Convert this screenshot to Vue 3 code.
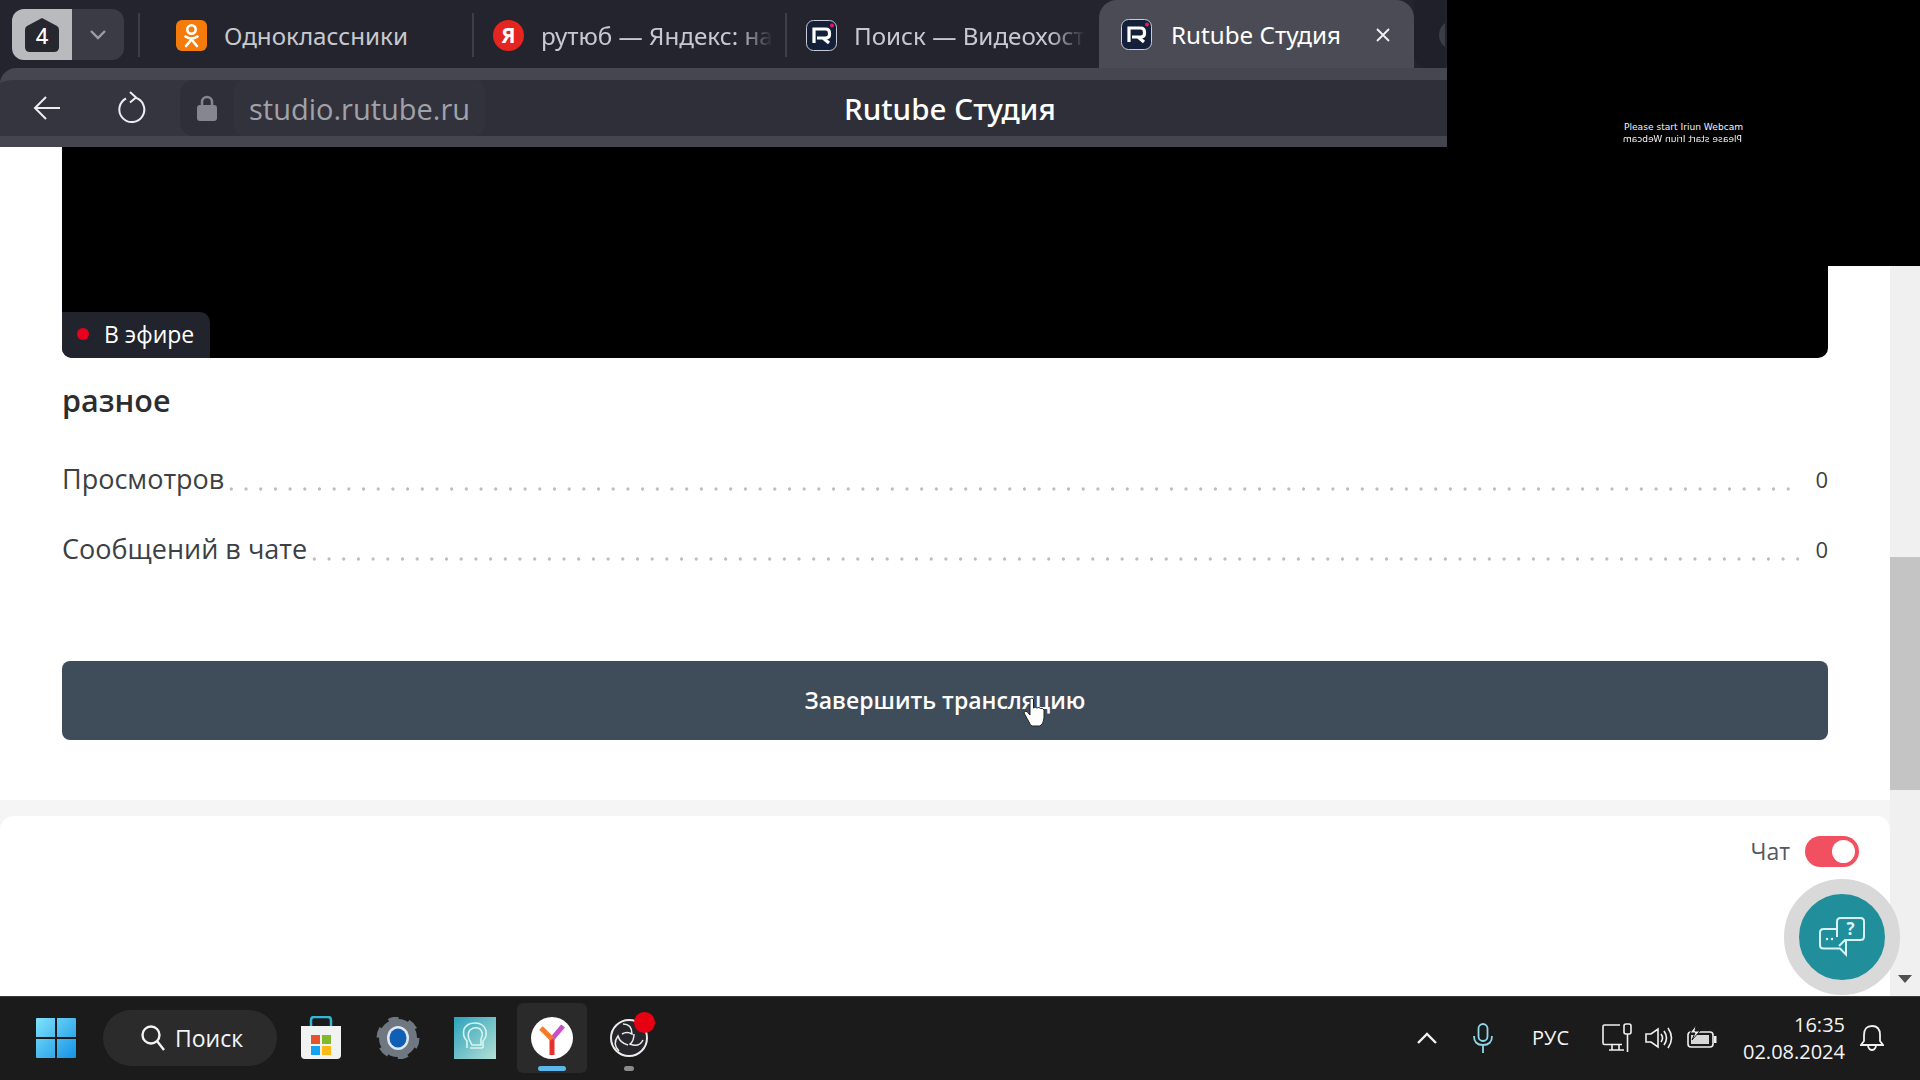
<template>
  <div class="screen">
    <header class="browser">
      <div class="tabstrip">
        <div class="counter">
          <div class="counter-main">
            <svg class="counter-shape" width="36" height="36" viewBox="0 0 36 36">
              <path d="M18 1 L33 9 Q35 10 35 13 V30 Q35 35 30 35 H6 Q1 35 1 30 V13 Q1 10 3 9 Z" fill="#26272f" />
            </svg>
            <span>4</span>
          </div>
          <div class="counter-more">
            <svg width="18" height="12" viewBox="0 0 18 12"><path d="M2 2l7 7 7-7" fill="none" stroke="#9c9da5" stroke-width="2.4" /></svg>
          </div>
        </div>
        <div class="tab" v-for="tab in tabs" :key="tab.title" :class="tab.cls">
          <svg v-if="tab.icon === 'ok'" class="fav" width="31" height="31" viewBox="0 0 31 31">
            <rect width="31" height="31" rx="6" fill="#f57c0a" />
            <circle cx="15.5" cy="9.5" r="4.2" fill="none" stroke="#fff" stroke-width="2.6" />
            <path d="M9.5 16.5q6 4 12 0M15.5 19v1M15.5 19.5l-5.5 6.5M15.5 19.5l5.500 6.500" fill="none" stroke="#fff" stroke-width="2.6" stroke-linecap="round" />
          </svg>
          <svg v-else-if="tab.icon === 'ya'" class="fav" width="31" height="31" viewBox="0 0 31 31">
            <circle cx="15.500" cy="15.500" r="15.500" fill="#e5251f" />
            <text x="15.500" y="23" text-anchor="middle" class="ya-letter">Я</text>
          </svg>
          <svg v-else class="fav" width="31" height="31" viewBox="0 0 31 31">
            <rect x=".5" y=".5" width="30" height="30" rx="7" fill="#14203a" stroke="#c9ccd6" />
            <path d="M8 23V9h11.500q4 0 4 4v1.500q0 3.500-4 3.500H11M17 18l6 5" fill="none" stroke="#fff" stroke-width="3.200" />
            <circle cx="26" cy="5.500" r="2" fill="#e6195a" />
          </svg>
          <span class="tab-title">{{ tab.title }}</span>
          <svg v-if="tab.cls === 'active'" class="tab-close" width="14" height="14" viewBox="0 0 14 14"><path d="M1 1l12 12M13 1L1 13" stroke="#f2f2f4" stroke-width="1.800" /></svg>
        </div>
        <div class="next-tab"></div>
      </div>
      <div class="toolbar">
        <svg class="tool" width="30" height="26" viewBox="0 0 30 26"><path d="M28 13H3M14 2L3 13l11 11" fill="none" stroke="#eeeef0" stroke-width="2" /></svg>
        <svg class="tool reload" width="30" height="34" viewBox="0 0 30 34"><path d="M18 6.500A12.500 12.500 0 1 1 9 7.500M13 1l6 5.500-6 5" fill="none" stroke="#eeeef0" stroke-width="2" /></svg>
        <div class="omnibox">
          <svg class="lock" width="20" height="27" viewBox="0 0 20 27"><path d="M5 12V7a5 5 0 0 1 10 0v5" fill="none" stroke="#85868e" stroke-width="2.500" /><rect y="10" width="20" height="16" rx="3" fill="#85868e" /></svg>
          <div class="host">studio.rutube.ru</div>
          <div class="page-title">Rutube Студия</div>
        </div>
      </div>
    </header>

    <div class="webcam">
      <p>Please start Iriun Webcam</p>
      <p class="mirrored">Please start Iriun Webcam</p>
    </div>

    <div class="workspace">
      <main class="page">
        <section class="stream">
          <div class="video">
            <div class="live"><i></i>В эфире</div>
          </div>
          <h2>разное</h2>
          <div class="stat" v-for="row in stats" :key="row.label">
            <span class="stat-label">{{ row.label }}</span>
            <span class="leader"></span>
            <span class="stat-value">{{ row.value }}</span>
          </div>
          <button class="finish" type="button">Завершить трансляцию</button>
        </section>
        <section class="chat">
          <span>Чат</span>
          <div class="toggle"><i></i></div>
        </section>
      </main>
      <aside class="scrollbar">
        <div class="thumb"></div>
        <svg class="scroll-down" width="14" height="8" viewBox="0 0 14 8"><path d="M0 0h14L7 8z" fill="#505050" /></svg>
      </aside>

      <div class="help">
        <svg width="46" height="40" viewBox="0 0 46 40">
          <path d="M18 12H4.500Q1 12 1 15.500V28q0 3.500 3.500 3.500H21l6 6V22" fill="none" stroke="#d8f3f4" stroke-width="2" />
          <path d="M18 20V4.500Q18 1 21.500 1h20Q45 1 45 4.500v15q0 3.500-3.500 3.500H26l-6 6" fill="none" stroke="#d8f3f4" stroke-width="2" />
          <text x="31.500" y="18" text-anchor="middle" class="help-q">?</text>
          <circle cx="8" cy="22" r="1.200" fill="#d8f3f4" /><circle cx="13" cy="22" r="1.200" fill="#d8f3f4" />
        </svg>
      </div>

      <svg class="pointer" width="24" height="30" viewBox="0 0 24 30">
        <path d="M7 2q2-2 3.500 0v9q2-1.500 3.500 0 2-1.500 3.500.5 2.500-1 3.500 1.500V21q-.5 6-4 8H9q-2-1-3-4L1 16q0-2.500 3-1.500L7 18z" fill="#fff" stroke="#222" stroke-width="1" />
      </svg>
    </div>

    <footer class="taskbar">
      <div class="task-left">
        <svg class="start" width="40" height="40" viewBox="0 0 40 40">
          <defs><linearGradient id="win" x1="0" y1="0" x2="1" y2="1"><stop offset="0" stop-color="#7fe3fa" /><stop offset="1" stop-color="#1492e6" /></linearGradient></defs>
          <path d="M0 1q0-1 1-1h18v19H0zM21 0h18q1 0 1 1v18H21zM0 21h19v19H1q-1 0-1-1zM21 21h19v18q0 1-1 1H21z" fill="url(#win)" />
        </svg>
        <div class="search">
          <svg width="26" height="28" viewBox="0 0 26 28"><circle cx="11" cy="11" r="8.500" fill="none" stroke="#f4f4f4" stroke-width="2.400" /><path d="M17 17l7 9" stroke="#f4f4f4" stroke-width="2.400" /></svg>
          <span>Поиск</span>
        </div>
        <svg class="app store" width="42" height="44" viewBox="0 0 42 44">
          <path d="M11 12V4q0-3 3-3h14q3 0 3 3v8" fill="none" stroke="#35b7d4" stroke-width="2.500" />
          <path d="M1 10h40v29q0 4-4 4H5q-4 0-4-4z" fill="#f1f3f3" />
          <rect x="11" y="19" width="9" height="9" fill="#e8532b" /><rect x="22" y="19" width="9" height="9" fill="#7fba2c" />
          <rect x="11" y="30" width="9" height="9" fill="#14a4ef" /><rect x="22" y="30" width="9" height="9" fill="#fab914" />
        </svg>
        <svg class="app gear" width="44" height="42" viewBox="0 0 44 42">
          <circle cx="22" cy="21" r="14" fill="none" stroke="#6f7880" stroke-width="10" />
          <circle cx="22" cy="21" r="18" fill="none" stroke="#6f7880" stroke-width="7" stroke-dasharray="9.400 9.450" />
          <ellipse cx="22" cy="21" rx="11" ry="12" fill="#dfe8f2" />
          <ellipse cx="22" cy="21" rx="8.500" ry="9.500" fill="#0f5fb5" />
        </svg>
        <svg class="app tile" width="42" height="42" viewBox="0 0 42 42">
          <defs><linearGradient id="tile" x1="0" y1="0" x2="1" y2="1"><stop offset="0" stop-color="#2aa2bb" /><stop offset="1" stop-color="#b5e0d6" /></linearGradient></defs>
          <rect width="42" height="42" fill="url(#tile)" />
          <path d="M13 31V24q-5-5-3-12 3-6 11-6 9 0 11 8 1 6-3 10v7M16 31h13M15 22q-2-5 1-9 5-4 10-1 4 4 1 10v6h-9z" fill="none" stroke="#d7f4f2" stroke-width="1.600" />
        </svg>
        <div class="active-app">
          <svg width="42" height="42" viewBox="0 0 42 42">
            <ellipse cx="21" cy="21" rx="21" ry="21" fill="#fff" />
            <path d="M21 38V22" fill="none" stroke="#e8312c" stroke-width="5" />
            <path d="M21 22L32 9" fill="none" stroke="#c84fc4" stroke-width="5" />
            <path d="M21 22L10 11" fill="none" stroke="#f4792b" stroke-width="5" />
          </svg>
          <i></i>
        </div>
        <div class="obs">
          <svg width="38" height="40" viewBox="0 0 38 40">
            <circle cx="19" cy="20" r="18" fill="#26262c" stroke="#ececec" stroke-width="2" />
            <path d="M13 6q9 0 9 10-5-3-10 0M33 22q-4 8-13 4 4-3 4-10M9 33q-7-7-1-15 2 7 10 9" fill="none" stroke="#ececec" stroke-width="1.500" />
          </svg>
          <b></b>
          <i></i>
        </div>
      </div>
      <div class="tray">
        <svg class="chev" width="20" height="12" viewBox="0 0 20 12"><path d="M1 11l9-9 9 9" fill="none" stroke="#f2f2f2" stroke-width="2.400" /></svg>
        <svg class="mic" width="20" height="30" viewBox="0 0 20 30"><rect x="5.500" y="1" width="9" height="17" rx="4.500" fill="none" stroke="#8fd6e8" stroke-width="1.800" /><path d="M1 13q0 9 9 9t9-9M10 22v8" fill="none" stroke="#8fd6e8" stroke-width="1.800" /></svg>
        <span class="lang">РУС</span>
        <svg class="net" width="30" height="29" viewBox="0 0 30 29"><path d="M18 2H2.500Q1 2 1 3.500V20q0 1.500 1.500 1.500H20M7 27h15M10 22v5M17 22v5" fill="none" stroke="#f0f0f0" stroke-width="1.600" /><rect x="22" y="1" width="7" height="10" rx="2" fill="none" stroke="#f0f0f0" stroke-width="1.600" /><path d="M25.500 11v18" stroke="#f0f0f0" stroke-width="1.600" /></svg>
        <svg class="sound" width="28" height="24" viewBox="0 0 28 24"><path d="M1 8h5l7-5v18l-7-5H1zM16 8q3 4 0 8M19 5q5 7 0 14M23 2q7 10 0 20" fill="none" stroke="#f0f0f0" stroke-width="1.600" /></svg>
        <svg class="batt" width="30" height="26" viewBox="0 0 30 26"><rect x="1" y="7" width="25" height="15" rx="3" fill="none" stroke="#f0f0f0" stroke-width="1.600" /><rect x="4" y="10" width="18" height="9" fill="#d8d8d8" /><rect x="27" y="11" width="2.500" height="7" fill="#f0f0f0" /><path d="M9 0L3 8h5l-3 7 8-9H8z" fill="#f0f0f0" stroke="#1b1b1b" /></svg>
        <div class="clock"><div>16:35</div><div>02.08.2024</div></div>
        <svg class="bell" width="24" height="28" viewBox="0 0 24 28"><path d="M12 2q8 0 8 9v6l3 4H1l3-4v-6q0-9 8-9zM8 22q1 4 4 4t4-4" fill="none" stroke="#f0f0f0" stroke-width="1.800" /></svg>
      </div>
    </footer>
  </div>
</template>

<script setup>
const tabs = [
  { title: 'Одноклассники', icon: 'ok', cls: 'ok-tab' },
  { title: 'рутюб — Яндекс: на', icon: 'ya', cls: 'faded' },
  { title: 'Поиск — Видеохост', icon: 'r', cls: 'faded' },
  { title: 'Rutube Студия', icon: 'r', cls: 'active' },
]

const stats = [
  { label: 'Просмотров', value: 0 },
  { label: 'Сообщений в чате', value: 0 },
]
</script>

<style>
html, body { margin: 0; overflow: hidden; background: #fff; }
</style>

<style scoped>
.screen {
  width: 1920px;
  height: 1080px;
  display: flex;
  flex-direction: column;
  position: relative;
  overflow: hidden;
  font-family: "Open Sans", "Noto Sans", sans-serif;
}

/* browser */
.browser { width: 1447px; height: 147px; flex: none; background: #23242e; color: #fff; display: flex; flex-direction: column; }
.tabstrip { height: 68px; display: flex; align-items: stretch; padding-left: 12px; flex: none; font-family: "Noto Sans", sans-serif; }
.counter { display: flex; height: 51px; margin-top: 9px; margin-right: 14px; }
.counter-main {
  width: 60px; background: #b9babe; border-radius: 12px 0 0 12px; position: relative;
  display: flex; align-items: center; justify-content: center; font-size: 22px; font-weight: 500; color: #fff;
}
.counter-main span { position: relative; }
.counter-shape { position: absolute; left: 12px; top: 8px; }
.counter-more { width: 52px; background: #3a3b45; border-radius: 0 12px 12px 0; display: flex; align-items: center; justify-content: center; }
.tab { display: flex; align-items: center; border-left: 2px solid #3d3e48; height: 44px; margin-top: 13px; padding-left: 19px; width: 313px; box-sizing: border-box; font-size: 24.2px; color: #c8c9ce; white-space: nowrap; }
.tab.ok-tab { width: 334px; padding-left: 36px; margin-left: 0; }
.tab.active {
  width: 315px; height: 68px; margin-top: 0; border: none; padding-left: 22px; background: #4a4b54; color: #fff;
  border-radius: 18px 18px 0 0; position: relative; margin-left: 1px;
}
.tab.active .fav { margin-right: 19px; }
.tab.faded .tab-title { -webkit-mask-image: linear-gradient(90deg, #000 85%, transparent); mask-image: linear-gradient(90deg, #000 85%, transparent); }
.tab.faded { width: 313px; }
.fav { flex: none; margin-right: 17px; }
.ya-letter { font: 700 21px "Noto Sans", sans-serif; fill: #fff; }
.tab-close { position: absolute; right: 24px; top: 28px; }
.next-tab { width: 31px; margin-left: 0; background: #1f2029; border-radius: 0 0 0 14px; height: 68px; position: relative; overflow: hidden; }
.next-tab::after { content: ""; position: absolute; left: 25px; top: 20px; width: 30px; height: 30px; border-radius: 50%; background: #3b3c46; }

.toolbar { flex: 1; background: #34353f; border-top: 12px solid #45464f; border-bottom: 11px solid #44454e; border-radius: 16px 0 0 0; display: flex; align-items: center; padding-left: 32px; }
.reload { margin-left: 55px; }
.omnibox { margin-left: 33px; flex: 1; align-self: stretch; background: #2e2f39; border-radius: 14px 0 0 14px; display: flex; align-items: center; padding-left: 17px; position: relative; }
.host { margin-left: 17px; padding: 0 15px; height: 100%; display: flex; align-items: center; background: #31323c; border-radius: 10px; font-size: 29px; color: #a1a2a9; }
.page-title { position: absolute; left: 664px; top: 50%; transform: translateY(-50%); font-size: 29.6px; font-weight: 500; color: #fff; white-space: nowrap; font-family: "Noto Sans", sans-serif; }

/* webcam preview */
.webcam { position: absolute; left: 1447px; top: 0; width: 473px; height: 266px; background: #000; z-index: 3; color: #f2f2f2; font: 9.1px/12px "DejaVu Sans", sans-serif; padding: 121px 0 0 177px; box-sizing: border-box; }
.webcam p { margin: 0; width: 118px; white-space: nowrap; }
.webcam .mirrored { transform: scaleX(-1); }

/* page */
.workspace { flex: 1; display: flex; min-height: 0; position: relative; }
.page { flex: 1; display: flex; flex-direction: column; background: #f5f5f5; }
.stream { background: #fff; padding: 0 62px 61px; height: 653px; box-sizing: border-box; flex: none; margin-bottom: 16px; display: flex; flex-direction: column; }
.video { height: 211px; background: #000; border-radius: 0 0 10px 10px; position: relative; flex: none; }
.live {
  position: absolute; left: 0; bottom: 0; width: 148px; height: 46px; background: #21242c; border-radius: 0 10px 0 10px;
  display: flex; align-items: center; color: #fff; font-size: 23px; line-height: 44px; box-sizing: border-box; padding: 0 0 2px 15px;
}
.live i { width: 12px; height: 12px; border-radius: 50%; background: #e8011f; margin-right: 15px; }
h2 { margin: 22px 0 1px; font-size: 30.5px; line-height: 40px; font-weight: 600; color: #2d2d2f; }
.stat { display: flex; align-items: flex-end; height: 36px; margin-top: 34px; color: #3c3f44; font-size: 27px; line-height: 36px; }
h2 + .stat { margin-top: 40px; }
.leader {
  flex: 1; height: 4px; margin: 0 16px 6px 0;
  background-image: radial-gradient(circle, #bdbdbd 1.400px, transparent 1.900px);
  background-size: 14.700px 4px;
  background-repeat: repeat-x;
}
.stat-value { font-size: 22px; }
.finish {
  margin-top: 94px; height: 79px; flex: none; border: none; border-radius: 8px; background: #3f4d5a; color: #fff;
  font: 600 23px "Open Sans", sans-serif; padding: 0 0 2px;
}
.chat {
  flex: 1; background: #fff; border-radius: 14px 14px 0 0; display: flex; justify-content: flex-end; align-items: flex-start; gap: 15px;
  padding: 20px 31px 0 0; color: #55585e; font-size: 23px; line-height: 30px;
}
.toggle { width: 54px; height: 31px; border-radius: 16px; background: #f0505f; position: relative; }
.toggle i { position: absolute; right: 4px; top: 4px; width: 23px; height: 23px; border-radius: 50%; background: #fff; }
.scrollbar { width: 30px; flex: none; background: #f0f0f0; display: flex; flex-direction: column; align-items: center; }
.thumb { width: 100%; height: 233px; margin-top: 410px; background: #c4c4c4; }
.scroll-down { margin-top: auto; margin-bottom: 13px; }
.help {
  position: absolute; left: 1784px; top: 732px; width: 86px; height: 86px; border-radius: 50%; background: #218f9b;
  border: 15px solid #d9d9d9; display: flex; align-items: center; justify-content: center;
}
.help-q { font: 700 17px "Open Sans", sans-serif; fill: #d8f3f4; }
.pointer { position: absolute; left: 1023px; top: 550px; }

/* taskbar */
.taskbar { height: 81px; padding-bottom: 2px; flex: none; background: #1b1b1b; border-top: 1px solid #3a3a3a; display: flex; align-items: center; justify-content: space-between; color: #f4f4f4; font-family: "Open Sans", "Noto Sans", sans-serif; }
.task-left { display: flex; align-items: center; padding-left: 36px; }
.search { width: 174px; height: 56px; margin-left: 27px; border-radius: 28px; background: #2b2b2b; display: flex; align-items: center; gap: 9px; padding-left: 37px; box-sizing: border-box; font-size: 23px; }
.store { margin-left: 23px; }
.gear { margin-left: 34px; }
.tile { margin-left: 34px; }
.active-app { width: 70px; height: 70px; margin-left: 21px; background: #2a2a2a; border-radius: 6px; display: flex; align-items: center; justify-content: center; position: relative; }
.active-app i { position: absolute; left: 21px; bottom: 2px; width: 28px; height: 5px; border-radius: 3px; background: #5cb8ea; }
.obs { margin-left: 23px; position: relative; height: 40px; }
.obs b { position: absolute; left: 24px; top: -6px; width: 21px; height: 21px; border-radius: 50%; background: #e60012; }
.obs i { position: absolute; left: 14px; top: 48px; width: 10px; height: 5px; border-radius: 3px; background: #8b8b8b; }
.tray { display: flex; align-items: center; padding-right: 36px; }
.mic { margin-left: 36px; }
.lang { margin-left: 39px; font-size: 20px; }
.net { margin-left: 33px; }
.sound { margin-left: 13px; }
.batt { margin-left: 14px; }
.clock { margin-left: 26px; text-align: right; font-size: 20px; line-height: 27px; }
.bell { margin-left: 15px; }
</style>
